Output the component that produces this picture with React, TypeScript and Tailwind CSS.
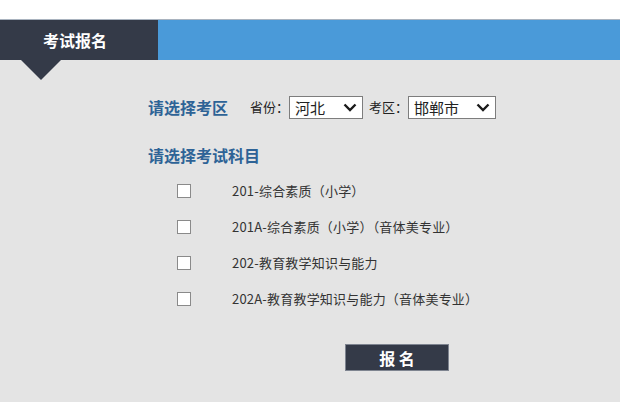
import React from 'react';

const subjects = [
  '201-综合素质（小学）',
  '201A-综合素质（小学）（音体美专业）',
  '202-教育教学知识与能力',
  '202A-教育教学知识与能力（音体美专业）',
];

function Chevron() {
  return (
    <svg width="14" height="9" viewBox="0 0 14 9" className="pointer-events-none absolute right-[6px] top-[7px]">
      <path d="M1.5 1.5L7 7l5.5-5.5" fill="none" stroke="#1a1a1a" strokeWidth="2.4" />
    </svg>
  );
}

function Select({ value, width }: { value: string; width: string }) {
  return (
    <div className={`relative h-[23px] ${width}`}>
      <select
        defaultValue={value}
        className="h-full w-full appearance-none border border-[#7d7d7d] bg-white pl-[5px] text-[15px] leading-[21px] text-[#222] outline-none"
      >
        <option>{value}</option>
      </select>
      <Chevron />
    </div>
  );
}

export default function App() {
  return (
    <div
      className="h-[402px] w-[620px] overflow-hidden bg-white pt-[19px]"
      style={{ fontFamily: '"Noto Sans CJK SC", "Liberation Sans", sans-serif' }}
    >
      {/* Header bar */}
      <div className="flex h-[41px] border-t border-[#a9b3bf] bg-[#4a9ad9]">
        <div className="flex w-[158px] items-center bg-[#343a48] pl-[43px] text-[16px] font-bold text-white">
          考试报名
        </div>
      </div>

      <div className="relative h-[342px] bg-[#e4e4e4] pl-[148px] pt-[35px]">
        {/* Tab pointer */}
        <div className="absolute left-[21px] top-0 h-0 w-0 border-x-[20px] border-t-[20px] border-x-transparent border-t-[#343a48]" />

        <div className="flex items-center text-[13px] text-[#222]">
          <span className="mr-[22px] text-[16px] font-bold text-[#2e6396]">请选择考区</span>
          <span>省份：</span>
          <Select value="河北" width="w-[74px]" />
          <span className="ml-[6px]">考区：</span>
          <Select value="邯郸市" width="w-[88px]" />
        </div>

        <div className="mt-[25px] text-[16px] font-bold leading-[22px] text-[#2e6396]">请选择考试科目</div>

        <ul className="mt-[14px] flex flex-col gap-[14px] pl-[29px]">
          {subjects.map(s => (
            <li key={s} className="flex h-[22px] items-center">
              <input
                type="checkbox"
                className="h-[14px] w-[14px] appearance-none border border-[#8a8a8a] bg-white"
              />
              <span className="ml-[41px] text-[13px] tracking-[0.2px] text-[#333]">{s}</span>
            </li>
          ))}
        </ul>

        <button className="ml-[197px] mt-[34px] h-[27px] w-[104px] border border-[#7e8490] bg-[#343a48] text-[16px] font-bold text-white">
          报 名
        </button>
      </div>
    </div>
  );
}
